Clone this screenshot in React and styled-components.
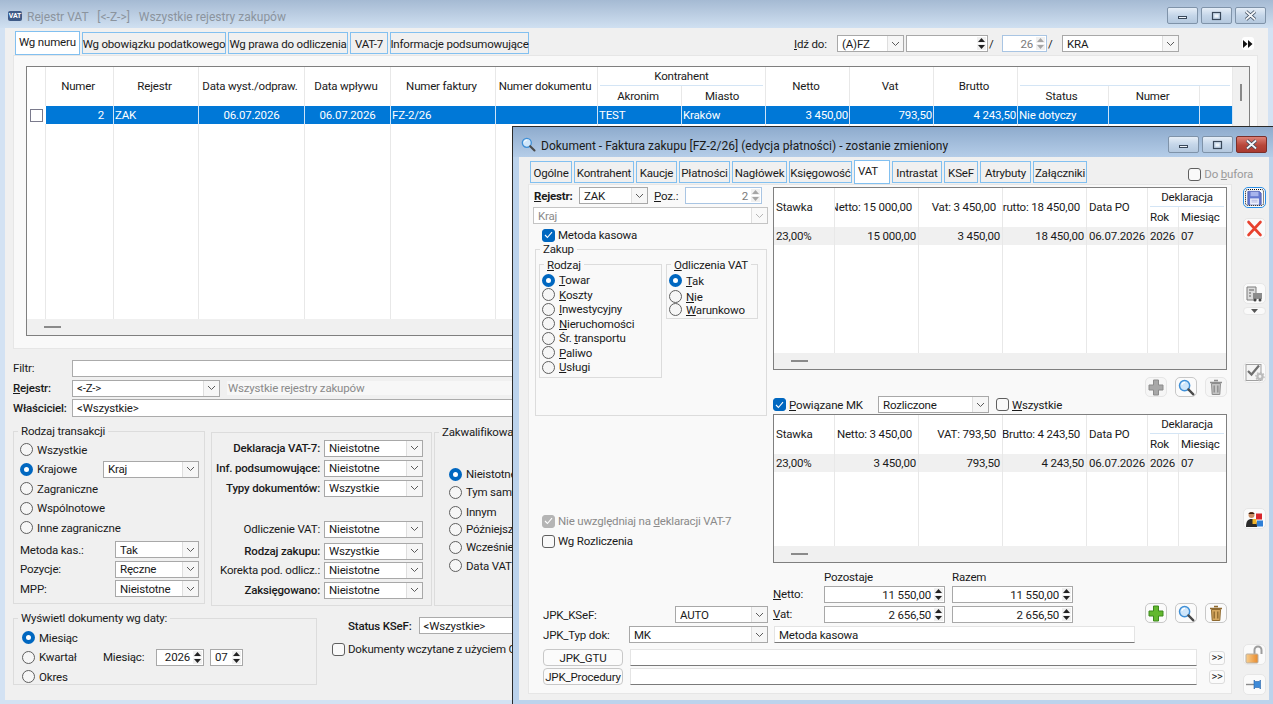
import React from 'react';
import styled, { createGlobalStyle } from 'styled-components';

const GlobalStyle = createGlobalStyle`
  html, body {
    margin: 0;
    padding: 0;
    width: 1273px;
    height: 704px;
    overflow: hidden;
    background: #c9dcf1;
  }
  body {
    font-family: Roboto, "Liberation Sans", sans-serif;
    font-size: 11.5px;
    letter-spacing: -0.18px;
    color: #1a1a1a;
  }
  fieldset { margin: 0; }
  u { text-underline-offset: 1px; }
`;

const Desktop = styled.div`
  position: relative;
  width: 1273px;
  height: 704px;
  overflow: hidden;
`;

const MainWindow = styled.div`
  display: flex;
  flex-direction: column;
  height: 704px;
  background: #d3e2f3;
`;

const TitleBar = styled.div`
  display: flex;
  align-items: center;
  flex: none;
  box-sizing: border-box;
  height: ${p => p.$h}px;
  padding: ${p => p.$active ? 5 : 3}px ${p => p.$active ? 6 : 7}px 0 8px;
  background: ${p => p.$active
    ? 'linear-gradient(#8eabcd, #b5cde8)'
    : 'linear-gradient(#a5bad3, #d0e0f1)'};
`;

const TitleText = styled.div`
  flex: 1;
  margin-left: ${p => p.$gap}px;
  padding-top: 2px;
  font-size: 12px;
  letter-spacing: 0;
  white-space: pre;
  color: ${p => p.$active ? '#1a1a1a' : '#8b949e'};
`;

const VatBadge = styled.span`
  display: flex;
  align-items: center;
  justify-content: center;
  width: 14px;
  height: 10px;
  background: #3f5a86;
  border-radius: 2px;
  color: #fff;
  font-size: 7px;
  font-weight: 700;
`;

const WinButtons = styled.div`
  display: flex;
  gap: 3px;
`;

const WinButton = styled.div`
  display: flex;
  align-items: center;
  justify-content: center;
  width: 31px;
  height: 17px;
  border: 1px solid ${p => p.$close ? '#7b2f2a' : '#7f93a9'};
  border-radius: 2px;
  box-sizing: border-box;
  background: ${p => p.$close
    ? 'linear-gradient(#dd8277, #b8473a 55%, #a93a30)'
    : 'linear-gradient(#e6eef7, #c5d6e9 50%, #b4c8de)'};
`;

const Client = styled.div`
  flex: 1;
  display: flex;
  flex-direction: column;
  min-height: 0;
  margin: 0 5px 4px;
  background: #f0f0f0;
`;

const TabBar = styled.div`
  display: flex;
  align-items: flex-end;
  flex: none;
  height: 27px;
  padding-left: ${p => p.$pad}px;
`;

const Tabs = styled.div`
  display: flex;
  align-items: flex-end;
  gap: 2px;
`;

const Tab = styled.div`
  display: flex;
  align-items: ${p => p.$active ? 'flex-start' : 'center'};
  justify-content: ${p => p.$active ? 'flex-start' : 'center'};
  box-sizing: border-box;
  width: ${p => p.$w}px;
  height: ${p => p.$active ? 24 : 22}px;
  margin-bottom: ${p => p.$lift}px;
  padding: ${p => p.$active ? 3 : 1}px 0 0 ${p => p.$active ? 3 : 0}px;
  border: 1px solid #82c0f0;
  background: ${p => p.$active ? '#fff' : '#f0f0f0'};
  white-space: nowrap;
`;

const GoTo = styled.div`
  display: flex;
  align-items: center;
  margin: 0 14px 3px auto;
`;

const GoToLabel = styled.span`
  width: 43px;
  white-space: nowrap;
`;

const Slash = styled.span`
  width: ${p => p.$w}px;
  padding-left: 1px;
  box-sizing: border-box;
`;

const NextButton = styled.div`
  display: flex;
  align-items: center;
  justify-content: center;
  width: 12px;
  height: 13px;
  margin-left: 63px;
  border-radius: 3px;
  background: #fff;
`;

const ListPanel = styled.div`
  flex: none;
  box-sizing: border-box;
  height: 294px;
  margin: 0 10px 0 8px;
  padding: 10px 0 0 12px;
  background: #f9f9f9;
  border: 1px solid #e6e6e6;
`;

const Table = styled.div`
  display: grid;
  box-sizing: border-box;
  width: ${p => p.$w}px;
  height: ${p => p.$h}px;
  grid-template-columns: ${p => p.$cols};
  grid-template-rows: 19px 20px 18px 1fr 16px;
  border: 1px solid #7f7f7f;
  background: #fff;
  overflow: hidden;
`;

const HeadCell = styled.div`
  display: flex;
  align-items: center;
  justify-content: ${p => ({ left: 'flex-start', right: 'flex-end', center: 'center' }[p.$align])};
  min-width: 0;
  padding: 0 ${p => p.$align === 'center' ? 3 : 6}px 1px ${p => p.$align === 'center' ? 0 : 2}px;
  border-right: 1px solid #e8e8e8;
  overflow: hidden;
  white-space: nowrap;
`;

const GroupHead = styled.div`
  display: flex;
  min-width: 0;
  border-right: 1px solid #e8e8e8;
`;

const GroupTitle = styled.div`
  flex: 1;
  display: flex;
  align-items: center;
  justify-content: center;
  margin: 0 2px;
  border-bottom: 1px solid #d4e5f5;
  white-space: nowrap;
`;

const RowCell = styled.div`
  display: flex;
  align-items: center;
  justify-content: ${p => ({ left: 'flex-start', right: 'flex-end', center: 'center' }[p.$align])};
  min-width: 0;
  padding: 0 ${p => p.$padEnd || p.$pad}px 0 ${p => p.$pad}px;
  background: ${p => p.$selected ? '#0078d7' : '#f0f0f0'};
  color: ${p => p.$selected ? '#fff' : '#1a1a1a'};
  border-right: 1px solid ${p => p.$selected ? '#cfe3f6' : '#e8e8e8'};
  overflow: hidden;
  white-space: nowrap;
`;

const MarkerCell = styled.div`
  display: flex;
  align-items: center;
  justify-content: center;
  background: #fff;
`;

const RowMarker = styled.span`
  box-sizing: border-box;
  width: 13px;
  height: 13px;
  border: 1px solid #7a7a8c;
  background: #fff;
`;

const FillCell = styled.div`
  border-right: 1px solid #e8e8e8;
`;

const HScroll = styled.div`
  display: flex;
  align-items: center;
  grid-column: 1 / -1;
  padding-left: 17px;
  background: #f0f0f0;
`;

const HThumb = styled.span`
  width: 17px;
  height: 2px;
  background: #8a8a8a;
`;

const VScroll = styled.div`
  grid-row: 1 / 5;
  padding: 17px 0 0 7px;
  background: #f0f0f0;
`;

const VThumb = styled.div`
  width: 2px;
  height: 17px;
  background: #8a8a8a;
`;

const FilterForm = styled.div`
  display: grid;
  flex: none;
  grid-template-columns: 59px 1fr;
  grid-auto-rows: 18px;
  row-gap: 2px;
  align-items: center;
  margin: 10px 10px 0 8px;
`;

const Label = styled.span`
  width: ${p => (p.$w ? `${p.$w}px` : 'auto')};
  flex: none;
  box-sizing: border-box;
  padding-left: ${p => p.$pl || 0}px;
  font-weight: ${p => (p.$bold ? 700 : p.$strong ? 500 : 400)};
  text-align: ${p => p.$right ? 'right' : 'left'};
  color: ${p => p.$muted ? '#8a8a8a' : 'inherit'};
  white-space: nowrap;
`;

const FieldRow = styled.div`
  display: flex;
  gap: 6px;
  align-items: center;
`;

const TextField = styled.div`
  display: flex;
  align-items: center;
  box-sizing: border-box;
  flex: ${p => (p.$w ? 'none' : '1')};
  width: ${p => (p.$w ? `${p.$w}px` : 'auto')};
  height: ${p => p.$h || 17}px;
  padding-left: ${p => p.$readonly ? 1 : 4}px;
  background: ${p => p.$readonly ? '#f7f7f7' : '#fff'};
  color: ${p => p.$readonly ? '#8a8a8a' : 'inherit'};
  border: 1px solid ${p => p.$readonly ? '#f0f0f0' : p.$flat ? '#e4e4e4' : '#ababab'};
  border-bottom-color: ${p => p.$readonly ? '#f0f0f0' : p.$flat ? '#7a7a7a' : '#ababab'};
  white-space: nowrap;
`;

const ComboBox = styled.div`
  display: flex;
  align-items: center;
  flex: none;
  box-sizing: border-box;
  width: ${p => p.$w}px;
  height: 17px;
  margin-left: ${p => (p.$push ? 'auto' : '0')};
  padding-left: 4px;
  background: #fff;
  border: 1px solid ${p => p.$disabled ? '#c4c4c4' : '#a8a8a8'};
  color: ${p => p.$disabled ? '#8a8a8a' : 'inherit'};
`;

const ComboText = styled.span`
  flex: 1;
  min-width: 0;
  white-space: nowrap;
  overflow: hidden;
`;

const ComboArrow = styled.span`
  display: flex;
  align-items: center;
  justify-content: center;
  align-self: stretch;
  width: 15px;
  background: ${p => p.$disabled ? '#f9f9f9' : '#f6f6f6'};
  border-left: 1px solid #dedede;
`;

const SpinBox = styled.div`
  display: flex;
  align-items: center;
  flex: none;
  box-sizing: border-box;
  width: ${p => p.$w}px;
  height: ${p => p.$h || 17}px;
  padding-left: 4px;
  background: #fff;
  border: 1px solid ${p => p.$disabled ? '#a9c5e3' : '#a8a8a8'};
  color: ${p => p.$disabled ? '#7a7a7a' : 'inherit'};
`;

const SpinText = styled.span`
  flex: 1;
  padding-right: ${p => p.$left ? 0 : 2}px;
  text-align: ${p => p.$left ? 'left' : 'right'};
  white-space: nowrap;
`;

const SpinArrows = styled.span`
  display: flex;
  flex-direction: column;
  align-self: stretch;
  gap: 1px;
  width: 11px;
  padding: 1px;
  box-sizing: border-box;
`;

const SpinStep = styled.span`
  flex: 1;
  display: flex;
  align-items: center;
  justify-content: center;
  background: #f0f0f0;
`;

const TransactionRow = styled.div`
  display: flex;
  flex: none;
  gap: ${p => p.$gap || 0}px;
  align-items: flex-start;
  margin: ${p => p.$mt}px 0 0 8px;
`;

const Group = styled.fieldset`
  box-sizing: border-box;
  flex: none;
  width: ${p => p.$w}px;
  height: ${p => p.$h}px;
  margin: ${p => p.$mt || 0}px 0 0 ${p => p.$ml || 0}px;
  padding: 0;
  border: 1px solid #dcdcdc;
  min-width: 0;
`;

const GroupBody = styled.div`
  padding: ${p => p.$pad};
`;

const GroupLegend = styled.legend`
  margin-left: 4px;
  padding: 0 3px;
  height: ${p => p.$h || 16}px;
  line-height: ${p => (p.$h ? p.$h + 3 : 16)}px;
  white-space: nowrap;
`;

const PlainGroup = styled.div`
  box-sizing: border-box;
  flex: none;
  width: ${p => p.$w}px;
  height: ${p => p.$h}px;
  margin-top: ${p => p.$mt}px;
  padding: 5px 8px 0 0;
  border: 1px solid #dcdcdc;
`;

const OptionRow = styled.div`
  display: flex;
  align-items: center;
  height: ${p => p.$h}px;
  margin-top: ${p => p.$mt || 0}px;
`;

const RadioDot = styled.span`
  flex: none;
  box-sizing: border-box;
  width: 13px;
  height: 13px;
  margin-right: 4px;
  border-radius: 50%;
  border: ${p => p.$on ? '4px solid #0067c0' : '1px solid #5f5f5f'};
  background: ${p => p.$on ? '#fff' : '#f6f6f6'};
`;

const CheckBox = styled.span`
  display: flex;
  align-items: center;
  justify-content: center;
  flex: none;
  box-sizing: border-box;
  width: 13px;
  height: 13px;
  margin-right: 3px;
  border-radius: 3px;
  border: 1px solid ${p => p.$on ? (p.$muted ? '#b5b5b5' : '#0067c0') : '#5f5f5f'};
  background: ${p => p.$on ? (p.$muted ? '#b5b5b5' : '#0067c0') : '#f9f9f9'};
`;

const MiddleRow = styled.div`
  display: grid;
  grid-template-columns: minmax(0, 1fr) 99px;
  column-gap: 4px;
  align-items: center;
  height: ${p => p.$h}px;
  margin-top: ${p => p.$mt || 0}px;
`;

const StatusColumn = styled.div`
  display: flex;
  flex-direction: column;
  margin: 7px 0 0 15px;
  white-space: nowrap;
`;

const StatusRow = styled.div`
  display: flex;
  align-items: center;
  gap: 7px;
  padding-left: 16px;
`;

const DateFilter = styled.div`
  padding: 2px 0 0 8px;
`;

const DocumentWindow = styled.div`
  position: absolute;
  left: 512px;
  top: 126px;
  width: 761px;
  height: 578px;
  display: flex;
  flex-direction: column;
  box-sizing: border-box;
  border-top: 1px solid #2a2a2a;
  border-left: 1px solid #2a2a2a;
  background: #bcd3ec;
`;

const DocClient = styled.div`
  flex: 1;
  display: flex;
  flex-direction: column;
  min-height: 0;
  margin: 0 4px 4px 6px;
  background: #f0f0f0;
`;

const DoBufora = styled.div`
  display: flex;
  align-items: center;
  margin: 0 16px 3px auto;
  color: #9a9a9a;
`;

const DocBody = styled.div`
  flex: 1;
  display: flex;
  min-height: 0;
`;

const DocPanel = styled.div`
  display: flex;
  flex-direction: column;
  box-sizing: border-box;
  flex: none;
  width: 704px;
  height: 510px;
  margin-left: 9px;
  background: #f9f9f9;
  border: 1px solid #e6e6e6;
`;

const UpperArea = styled.div`
  display: flex;
  flex: none;
  gap: 5px;
  height: 378px;
  padding: 2px 0 0 4px;
`;

const FormColumn = styled.div`
  flex: none;
  width: 235px;
`;

const RegisterRow = styled.div`
  display: flex;
  align-items: center;
  height: 17px;
`;

const KrajRow = styled.div`
  margin-top: 3px;
`;

const CheckRow = styled.div`
  display: flex;
  align-items: center;
  height: ${p => p.$h || 18}px;
  margin-top: ${p => p.$mt || 0}px;
  padding-left: ${p => p.$pad || 0}px;
`;

const InnerGroups = styled.div`
  display: flex;
  gap: 4px;
  padding-left: 3px;
  align-items: flex-start;
`;

const TablesColumn = styled.div`
  flex: none;
  width: 454px;
`;

const Toolbar = styled.div`
  display: flex;
  justify-content: flex-end;
  gap: 8px;
  height: 19px;
  margin-top: ${p => p.$mt || 0}px;
`;

const ToolButton = styled.div`
  display: flex;
  align-items: center;
  justify-content: center;
  flex: none;
  box-sizing: border-box;
  width: 22px;
  height: ${p => p.$h || 20}px;
  border: 1px solid ${p => p.$on ? '#c8c8c8' : '#e6e6e6'};
  border-radius: 5px;
  background: ${p => p.$on ? '#fbfbfb' : '#f6f6f6'};
`;

const LinkedRow = styled.div`
  display: flex;
  align-items: center;
  height: 17px;
  margin-bottom: 1px;
`;

const LinkedLabel = styled.div`
  display: flex;
  align-items: center;
  width: 105px;
`;

const LinkedAll = styled.div`
  display: flex;
  align-items: center;
  margin-left: 7px;
`;

const LowerArea = styled.div`
  display: flex;
  flex-direction: column;
  padding-left: 14px;
  margin-top: 5px;
`;

const SummaryRow = styled.div`
  display: flex;
  align-items: flex-end;
`;

const KsefBlock = styled.div`
  display: flex;
  align-items: center;
  justify-content: space-between;
  width: 225px;
  height: 17px;
  flex: none;
`;

const Amounts = styled.div`
  display: grid;
  flex: none;
  grid-template-columns: 51px 121px 128px;
  grid-template-rows: 16px 20px 17px;
  align-items: start;
  margin-left: 5px;
  width: 300px;
`;

const AmountLabel = styled.span`
  line-height: 17px;
`;

const AmountCell = styled.div`
  display: flex;
  padding-left: ${p => p.$shift || 0}px;
  white-space: nowrap;
`;

const SummaryTools = styled(Toolbar)`
  height: 20px;
  margin-left: auto;
  margin-right: 4px;
`;

const FormRow = styled.div`
  display: flex;
  align-items: center;
  gap: ${p => p.$gap || 0}px;
  height: 17px;
  margin-top: ${p => p.$mt || 0}px;
`;

const PushButton = styled.div`
  display: flex;
  align-items: center;
  justify-content: center;
  flex: none;
  box-sizing: border-box;
  width: 80px;
  height: 17px;
  border: 1px solid #c8c8c8;
  border-radius: 4px;
  background: #fbfbfb;
  white-space: nowrap;
`;

const MoreButton = styled.div`
  display: flex;
  align-items: center;
  justify-content: center;
  flex: none;
  box-sizing: border-box;
  width: 16px;
  height: 14px;
  margin-left: 5px;
  border: 1px solid #dcdcdc;
  border-radius: 3px;
  background: #fbfbfb;
  font-size: 11px;
`;

const Sidebar = styled.div`
  display: flex;
  flex-direction: column;
  flex: none;
  width: 36px;
  padding-left: 11px;
  box-sizing: border-box;
`;

const SideButton = styled.div`
  display: flex;
  align-items: center;
  justify-content: center;
  box-sizing: border-box;
  width: 23px;
  height: ${p => p.$h || 21}px;
  margin-top: ${p => p.$mt}px;
  border-radius: 5px;
  background: #fafafa;
  border: 1px solid ${p => p.$focus ? '#2b8fe6' : '#e6e6e6'};
  outline: ${p => p.$focus ? '1px dotted #111' : 'none'};
  outline-offset: -3px;
`;

const Chevron = ({ color = '#5a5a5a' }) => (
  <svg width="9" height="6" viewBox="0 0 9 6">
    <path d="M1 1l3.5 3.5L8 1" fill="none" stroke={color} strokeWidth="1" />
  </svg>
);

const Combo = ({ w, push, disabled, children }) => (
  <ComboBox $w={w} $push={push} $disabled={disabled}>
    <ComboText>{children}</ComboText>
    <ComboArrow $disabled={disabled}>
      <Chevron color={disabled ? '#b5b5b5' : '#5a5a5a'} />
    </ComboArrow>
  </ComboBox>
);

const Triangle = ({ up, color }) => (
  <svg width="7" height="4" viewBox="0 0 7 4">
    <path d={up ? 'M3.5 0L7 4H0z' : 'M0 0h7L3.5 4z'} fill={color} />
  </svg>
);

const Spin = ({ w, left, disabled, children }) => {
  const color = disabled ? '#a5a5a5' : '#222';
  return (
    <SpinBox $w={w} $disabled={disabled}>
      <SpinText $left={left}>{children}</SpinText>
      <SpinArrows>
        <SpinStep><Triangle up color={color} /></SpinStep>
        <SpinStep><Triangle color={color} /></SpinStep>
      </SpinArrows>
    </SpinBox>
  );
};

const Radio = ({ on, h, mt, children }) => (
  <OptionRow $h={h} $mt={mt}>
    <RadioDot $on={on} />
    <span>{children}</span>
  </OptionRow>
);

const Check = ({ on, muted }) => (
  <CheckBox $on={on} $muted={muted}>
    {on && (
      <svg width="9" height="8" viewBox="0 0 9 8">
        <path d="M1 4l2.4 2.5L8 1.2" fill="none" stroke="#fff" strokeWidth="1.1" />
      </svg>
    )}
  </CheckBox>
);

const DataTable = ({ w, h, columns, selected, vscroll, cellPad }) => {
  const template = columns.map(c => `${c.w}px`).join(' ') + (vscroll ? ' 16px' : '');
  const head = [];
  columns.forEach((c, i) => {
    if (c.marker) {
      head.push(<FillCell key={`h${i}`} style={{ gridColumn: i + 1, gridRow: '1 / span 2' }} />);
    } else if (c.span !== undefined) {
      head.push(
        <GroupHead key={`g${i}`} style={{ gridColumn: `${i + 1} / span ${c.span}`, gridRow: 1 }}>
          <GroupTitle>{c.group}</GroupTitle>
        </GroupHead>
      );
    }
    if (c.sub !== undefined) {
      head.push(
        <HeadCell key={`s${i}`} $align={c.subAlign || 'center'} style={{ gridColumn: i + 1, gridRow: 2 }}>
          {c.sub}
        </HeadCell>
      );
    } else if (!c.marker) {
      head.push(
        <HeadCell key={`h${i}`} $align={c.headAlign || 'center'} style={{ gridColumn: i + 1, gridRow: '1 / span 2' }}>
          {c.head}
        </HeadCell>
      );
    }
  });
  return (
    <Table $w={w} $h={h} $cols={template}>
      {head}
      {columns.map((c, i) => c.marker
        ? <MarkerCell key={`r${i}`} style={{ gridColumn: i + 1, gridRow: 3 }}><RowMarker /></MarkerCell>
        : <RowCell key={`r${i}`} $align={c.align || 'left'} $pad={cellPad} $padEnd={c.padEnd} $selected={selected} style={{ gridColumn: i + 1, gridRow: 3 }}>{c.val}</RowCell>
      )}
      {columns.map((c, i) => <FillCell key={`f${i}`} style={{ gridColumn: i + 1, gridRow: 4 }} />)}
      {vscroll && <VScroll style={{ gridColumn: columns.length + 1 }}><VThumb /></VScroll>}
      <HScroll><HThumb /></HScroll>
    </Table>
  );
};

const registerColumns = [
  { w: 19, marker: true },
  { w: 68, head: 'Numer', val: '2', align: 'right', padEnd: 9 },
  { w: 85, head: 'Rejestr', val: 'ZAK' },
  { w: 106, head: 'Data wyst./odpraw.', val: '06.07.2026', align: 'center' },
  { w: 86, head: 'Data wpływu', val: '06.07.2026', align: 'center' },
  { w: 105, head: 'Numer faktury', val: 'FZ-2/26' },
  { w: 102, head: 'Numer dokumentu', val: '' },
  { w: 84, span: 2, group: 'Kontrahent', sub: 'Akronim', val: 'TEST' },
  { w: 84, sub: 'Miasto', val: 'Kraków' },
  { w: 84, head: 'Netto', val: '3 450,00', align: 'right' },
  { w: 84, head: 'Vat', val: '793,50', align: 'right' },
  { w: 84, head: 'Brutto', val: '4 243,50', align: 'right' },
  { w: 91, span: 3, group: '', sub: 'Status', val: 'Nie dotyczy' },
  { w: 91, sub: 'Numer', val: '' },
  { w: 33, sub: '', val: '' },
];

const vatColumns = (netto, vat, brutto, vals) => [
  { w: 61, head: 'Stawka', headAlign: 'left', val: '23,00%' },
  { w: 84, head: netto, headAlign: 'right', val: vals[0], align: 'right' },
  { w: 84, head: vat, headAlign: 'right', val: vals[1], align: 'right' },
  { w: 84, head: brutto, headAlign: 'right', val: vals[2], align: 'right' },
  { w: 61, head: 'Data PO', headAlign: 'left', val: '06.07.2026' },
  { w: 31, span: 2, group: 'Deklaracja', sub: 'Rok', subAlign: 'left', val: '2026' },
  { w: 48, sub: 'Miesiąc', subAlign: 'left', val: '07' },
];

const MinimizeIcon = () => (
  <svg width="11" height="9" viewBox="0 0 11 9">
    <rect x="1.500" y="5.500" width="8" height="2" fill="#eef3f9" stroke="#39485a" />
  </svg>
);

const RestoreIcon = () => (
  <svg width="11" height="10" viewBox="0 0 11 10">
    <rect x="1.500" y="1.500" width="8" height="7" fill="none" stroke="#39485a" strokeWidth="1.200" />
    <rect x="3.500" y="3.500" width="4" height="3" fill="#eef3f9" />
  </svg>
);

const CloseIcon = () => (
  <svg width="13" height="11" viewBox="0 0 13 11">
    <path d="M2 1.500l9 8M11 1.500l-9 8" stroke="#39485a" strokeWidth="3.400" />
    <path d="M2 1.500l9 8M11 1.500l-9 8" stroke="#f4f6f9" strokeWidth="1.800" />
  </svg>
);

const SearchIcon = ({ size = 16 }) => (
  <svg width={size} height={size} viewBox="0 0 16 16">
    <circle cx="6.200" cy="6.200" r="4.800" fill="#cfe6fa" stroke="#3f8fd6" strokeWidth="1.400" />
    <path d="M3.600 5.600a3 3 0 0 1 3-2.400" fill="none" stroke="#fff" strokeWidth="1" />
    <path d="M9.800 9.800l4.600 4.600" stroke="#4a4a4a" strokeWidth="2.200" strokeLinecap="round" />
  </svg>
);

const PlusIcon = ({ fill, stroke }) => (
  <svg width="16" height="17" viewBox="0 0 16 17">
    <path d="M5.500 1h5v5h4.500v5h-4.500v5h-5v-5H1V6h4.500z" fill={fill} stroke={stroke} />
  </svg>
);

const TrashIcon = ({ fill, stroke }) => (
  <svg width="14" height="17" viewBox="0 0 14 17">
    <path d="M5 1.500h4M1 3.500h12" stroke={stroke} strokeWidth="1.600" />
    <path d="M2.500 4.500h9l-.7 11H3.200z" fill={fill} stroke={stroke} />
    <path d="M5.200 6.500v7M8.800 6.500v7" stroke={stroke} strokeWidth="1.400" />
  </svg>
);

const SaveIcon = () => (
  <svg width="15" height="16" viewBox="0 0 17 17">
    <path d="M1 1h13l2 2v13H1z" fill="#6478cf" stroke="#4a5bb0" />
    <rect x="4" y="1.500" width="9" height="5" fill="#a7b4ec" />
    <rect x="3.500" y="9" width="10" height="7" fill="#eef0fb" />
    <path d="M5 11h7M5 13h7" stroke="#a5aede" />
  </svg>
);

const CancelIcon = () => (
  <svg width="17" height="17" viewBox="0 0 17 17">
    <path d="M2.500 2l12 13M14.500 2l-12 13" stroke="#e8412e" strokeWidth="2.600" strokeLinecap="round" />
  </svg>
);

const DepotIcon = () => (
  <svg width="17" height="17" viewBox="0 0 17 17">
    <path d="M1 2h9v13H1z" fill="#dcdcdc" stroke="#7c7c7c" />
    <path d="M3 5h5M3 8h2M3 11h2" stroke="#8a8a8a" strokeWidth="1.400" />
    <rect x="7" y="8" width="9" height="6" fill="#8c8c8c" />
    <circle cx="9" cy="15" r="1.500" fill="#444" />
    <circle cx="14" cy="15" r="1.500" fill="#444" />
  </svg>
);

const DropIcon = () => (
  <svg width="7" height="4" viewBox="0 0 7 4">
    <path d="M0 0h7L3.500 4z" fill="#555" />
  </svg>
);

const VerifyIcon = () => (
  <svg width="20" height="19" viewBox="0 0 20 19">
    <rect x="1" y="1.500" width="15" height="16" fill="#f4f4f4" stroke="#a0a0a0" />
    <path d="M3 8l3.500 3.500L14 2.500" fill="none" stroke="#6f6f6f" strokeWidth="2.200" />
    <circle cx="15" cy="13.500" r="2.600" fill="#f4f4f4" stroke="#bcbcbc" strokeWidth="2.400" />
    <circle cx="15" cy="13.500" r="4.200" fill="none" stroke="#bcbcbc" strokeWidth="1.200" strokeDasharray="1.600 1.600" />
  </svg>
);

const PersonIcon = () => (
  <svg width="18" height="18" viewBox="0 0 18 18">
    <path d="M0 17c0-6 2-8 5.500-8S11 11 11 17z" fill="#2b2b2b" />
    <circle cx="5.500" cy="5" r="3" fill="#c98d63" />
    <path d="M2.500 4c0-2.500 6-2.500 6 0z" fill="#3a1d0f" />
    <rect x="10" y="3.500" width="6" height="6" fill="#d8262c" />
    <rect x="6.500" y="9" width="4" height="5" fill="#f0b428" />
    <rect x="11" y="10.500" width="6" height="6" fill="#2f7fd6" />
  </svg>
);

const LockIcon = () => (
  <svg width="19" height="19" viewBox="0 0 19 19">
    <path d="M9.500 9V5a3.500 3.500 0 0 1 7 0v4" fill="none" stroke="#9d9d9d" strokeWidth="2" />
    <defs>
      <linearGradient id="lockBody" x1="0" x2="1" y1="0" y2="0">
        <stop offset="0" stopColor="#f8cf8f" />
        <stop offset="1" stopColor="#e88a2c" />
      </linearGradient>
    </defs>
    <rect x="1" y="9" width="12" height="9" rx="1" fill="url(#lockBody)" stroke="#b9b0a4" />
  </svg>
);

const PinIcon = () => (
  <svg width="17" height="13" viewBox="0 0 17 13">
    <path d="M0 6.500h8" stroke="#8a8a8a" strokeWidth="1.400" />
    <path d="M8 2l1.500 1.500H13L14.500 2v9L13 9.500H9.500L8 11z" fill="#3d8ad8" stroke="#2a63a8" strokeWidth=".6" />
  </svg>
);

const mainTabs = [
  ['Wg numeru', 65, true],
  ['Wg obowiązku podatkowego', 144],
  ['Wg prawa do odliczenia', 120],
  ['VAT-7', 38],
  ['Informacje podsumowujące', 139],
];

const docTabs = [
  ['Ogólne', 42],
  ['Kontrahent', 60],
  ['Kaucje', 41],
  ['Płatności', 51],
  ['Nagłówek', 55],
  ['Księgowość', 63],
  ['VAT', 36, true],
  ['Intrastat', 50],
  ['KSeF', 34],
  ['Atrybuty', 51],
  ['Załączniki', 54],
];

const middleFilters = [
  { label: 'Deklaracja VAT-7:', value: 'Nieistotne', h: 20, strong: true },
  { label: 'Inf. podsumowujące:', value: 'Nieistotne', h: 20, strong: true },
  { label: 'Typy dokumentów:', value: 'Wszystkie', h: 20, strong: true },
  { label: 'Odliczenie VAT:', value: 'Nieistotne', h: 20, mt: 21 },
  { label: 'Rodzaj zakupu:', value: 'Wszystkie', h: 20, mt: 2, strong: true },
  { label: 'Korekta pod. odlicz.:', value: 'Nieistotne', h: 18 },
  { label: 'Zaksięgowano:', value: 'Nieistotne', h: 22, strong: true },
];

const qualifiedOptions = [
  ['Nieistotne', 18, true],
  ['Tym samym', 18],
  ['Innym', 18, false, 2],
  ['Późniejszym', 16],
  ['Wcześniejszym', 20],
  ['Data VAT', 17],
];

const kindOptions = [
  [<><u>T</u>owar</>, true],
  [<><u>K</u>oszty</>],
  [<><u>I</u>nwestycyjny</>],
  [<><u>N</u>ieruchomości</>],
  [<>Śr. <u>t</u>ransportu</>],
  [<><u>P</u>aliwo</>],
  [<><u>U</u>sługi</>],
];

export default function App() {
  return (
    <Desktop>
      <GlobalStyle />
      <MainWindow>
        <TitleBar $h={28}>
          <VatBadge>VAT</VatBadge>
          <TitleText $gap={5}>{'Rejestr VAT   [<-Z->]   Wszystkie rejestry zakupów'}</TitleText>
          <WinButtons>
            <WinButton><MinimizeIcon /></WinButton>
            <WinButton><RestoreIcon /></WinButton>
            <WinButton><CloseIcon /></WinButton>
          </WinButtons>
        </TitleBar>
        <Client>
          <TabBar $pad={10}>
            <Tabs>
              {mainTabs.map(([text, w, active]) => (
                <Tab key={text} $w={w} $active={active} $lift={active ? 0 : 1}>{text}</Tab>
              ))}
            </Tabs>
            <GoTo>
              <GoToLabel><u>I</u>dź do:</GoToLabel>
              <Combo w={67}>(A)FZ</Combo>
              <Slash $w={2} />
              <Spin w={82} />
              <Slash $w={14}>/</Slash>
              <Spin w={45} disabled>26</Spin>
              <Slash $w={15}>/</Slash>
              <Combo w={117}>KRA</Combo>
              <NextButton>
                <svg width="10" height="8" viewBox="0 0 10 8">
                  <path d="M0 0l4.500 4L0 8zM5 0l4.500 4L5 8z" fill="#111" />
                </svg>
              </NextButton>
            </GoTo>
          </TabBar>
          <ListPanel>
            <DataTable w={1224} h={270} columns={registerColumns} selected vscroll cellPad={1} />
          </ListPanel>
          <FilterForm>
            <Label>Filtr:</Label>
            <TextField />
            <Label $strong><u>R</u>ejestr:</Label>
            <FieldRow>
              <Combo w={148}>{'<-Z->'}</Combo>
              <TextField $readonly $h={16}>Wszystkie rejestry zakupów</TextField>
            </FieldRow>
            <Label $strong>Właściciel:</Label>
            <TextField $h={18}>{'<Wszystkie>'}</TextField>
          </FilterForm>
          <TransactionRow $gap={6} $mt={6}>
            <Group $w={192} $h={181}>
              <GroupLegend>Rodzaj transakcji</GroupLegend>
              <GroupBody $pad="1px 5px 0 6px">
                <Radio h={19.5}>Wszystkie</Radio>
                <OptionRow $h={19.5}>
                  <RadioDot $on />
                  <span>Krajowe</span>
                  <Combo w={96} push>Kraj</Combo>
                </OptionRow>
                <Radio h={19.5}>Zagraniczne</Radio>
                <Radio h={19.5}>Wspólnotowe</Radio>
                <Radio h={19.5}>Inne zagraniczne</Radio>
                <OptionRow $h={19.5} $mt={2.5}>
                  <span>Metoda kas.:</span>
                  <Combo w={84} push>Tak</Combo>
                </OptionRow>
                <OptionRow $h={19.5}>
                  <span>Pozycje:</span>
                  <Combo w={84} push>Ręczne</Combo>
                </OptionRow>
                <OptionRow $h={19.5}>
                  <span>MPP:</span>
                  <Combo w={84} push>Nieistotne</Combo>
                </OptionRow>
              </GroupBody>
            </Group>
            <PlainGroup $w={221} $h={174} $mt={9}>
              {middleFilters.map(f => (
                <MiddleRow key={f.label} $h={f.h} $mt={f.mt}>
                  <Label $right $strong={f.strong}>{f.label}</Label>
                  <Combo w={99}>{f.value}</Combo>
                </MiddleRow>
              ))}
            </PlainGroup>
            <Group $w={400} $h={182} $mt={1} $ml={-4}>
              <GroupLegend>Zakwalifikowane do deklaracji</GroupLegend>
              <GroupBody $pad="25px 0 0 14px">
                {qualifiedOptions.map(([text, h, on, mt]) => (
                  <Radio key={text} h={h} on={on} mt={mt}>{text}</Radio>
                ))}
              </GroupBody>
            </Group>
          </TransactionRow>
          <TransactionRow $mt={4}>
            <Group $w={304} $h={75}>
              <GroupLegend>Wyświetl dokumenty wg daty:</GroupLegend>
              <DateFilter>
                <Radio on h={19.5}>Miesiąc</Radio>
                <OptionRow $h={19.5}>
                  <RadioDot />
                  <Label $w={64}>Kwartał</Label>
                  <Label $w={53}>Miesiąc:</Label>
                  <Spin w={48}>2026</Spin>
                  <Slash $w={6} />
                  <Spin w={33} left>07</Spin>
                </OptionRow>
                <Radio h={19.5}>Okres</Radio>
              </DateFilter>
            </Group>
            <StatusColumn>
              <StatusRow>
                <Label $strong>Status KSeF:</Label>
                <TextField $w={300} $h={17}>{'<Wszystkie>'}</TextField>
              </StatusRow>
              <CheckRow $mt={6}>
                <Check />
                <span>Dokumenty wczytane z użyciem OCR</span>
              </CheckRow>
            </StatusColumn>
          </TransactionRow>
        </Client>
      </MainWindow>

      <DocumentWindow>
        <TitleBar $h={30} $active>
          <SearchIcon size={15} />
          <TitleText $gap={5} $active>Dokument - Faktura zakupu [FZ-2/26] (edycja płatności) - zostanie zmieniony</TitleText>
          <WinButtons>
            <WinButton><MinimizeIcon /></WinButton>
            <WinButton><RestoreIcon /></WinButton>
            <WinButton $close><CloseIcon /></WinButton>
          </WinButtons>
        </TitleBar>
        <DocClient>
          <TabBar $pad={11}>
            <Tabs>
              {docTabs.map(([text, w, active]) => (
                <Tab key={text} $w={w} $active={active} $lift={active ? 0 : 1}>{text}</Tab>
              ))}
            </Tabs>
            <DoBufora>
              <Check />
              <span>Do <u>b</u>ufora</span>
            </DoBufora>
          </TabBar>
          <DocBody>
            <DocPanel>
              <UpperArea>
                <FormColumn>
                  <RegisterRow>
                    <Label $w={46} $pl={1} $bold><u>R</u>ejestr:</Label>
                    <Combo w={69}>ZAK</Combo>
                    <Label $w={37} $pl={6}><u>P</u>oz.:</Label>
                    <Spin w={77} disabled>2</Spin>
                  </RegisterRow>
                  <KrajRow>
                    <Combo w={235} disabled>Kraj</Combo>
                  </KrajRow>
                  <CheckRow $pad={9} $mt={2}>
                    <Check on />
                    <span>Metoda kasowa</span>
                  </CheckRow>
                  <Group $w={232} $h={175} $ml={2} $mt={-3}>
                    <GroupLegend>Zakup</GroupLegend>
                    <InnerGroups>
                      <Group $w={123} $h={121}>
                        <GroupLegend $h={14}><u>R</u>odzaj</GroupLegend>
                        <GroupBody $pad="2px 0 0 2px">
                          {kindOptions.map(([text, on], i) => (
                            <Radio key={i} on={on} h={14.5}>{text}</Radio>
                          ))}
                        </GroupBody>
                      </Group>
                      <Group $w={92} $h={62}>
                        <GroupLegend $h={14}><u>O</u>dliczenia VAT</GroupLegend>
                        <GroupBody $pad="2px 0 0 2px">
                          <Radio on h={15}><u>T</u>ak</Radio>
                          <Radio h={13} mt={2}><u>N</u>ie</Radio>
                          <Radio h={13}><u>W</u>arunkowo</Radio>
                        </GroupBody>
                      </Group>
                    </InnerGroups>
                  </Group>
                  <CheckRow $pad={9} $mt={96}>
                    <Check on muted />
                    <Label $muted>Nie uwzględniaj na <u>d</u>eklaracji VAT-7</Label>
                  </CheckRow>
                  <CheckRow $pad={9} $mt={2}>
                    <Check />
                    <span>Wg Rozliczenia</span>
                  </CheckRow>
                </FormColumn>
                <TablesColumn>
                  <DataTable
                    w={454}
                    h={183}
                    cellPad={2}
                    columns={vatColumns('Netto: 15 000,00', 'Vat: 3 450,00', 'Brutto: 18 450,00', ['15 000,00', '3 450,00', '18 450,00'])}
                  />
                  <Toolbar $mt={7}>
                    <ToolButton><PlusIcon fill="#a8a8a8" stroke="#8c8c8c" /></ToolButton>
                    <ToolButton $on><SearchIcon size={17} /></ToolButton>
                    <ToolButton><TrashIcon fill="#c4c4c4" stroke="#8e8e8e" /></ToolButton>
                  </Toolbar>
                  <LinkedRow>
                    <LinkedLabel>
                      <Check on />
                      <span><u>P</u>owiązane MK</span>
                    </LinkedLabel>
                    <Combo w={111}>Rozliczone</Combo>
                    <LinkedAll>
                      <Check />
                      <span><u>W</u>szystkie</span>
                    </LinkedAll>
                  </LinkedRow>
                  <DataTable
                    w={454}
                    h={149}
                    cellPad={2}
                    columns={vatColumns('Netto: 3 450,00', 'VAT: 793,50', 'Brutto: 4 243,50', ['3 450,00', '793,50', '4 243,50'])}
                  />
                </TablesColumn>
              </UpperArea>
              <LowerArea>
                <SummaryRow>
                  <KsefBlock>
                    <span>JPK_KSeF:</span>
                    <Combo w={93}>AUTO</Combo>
                  </KsefBlock>
                  <Amounts>
                    <span />
                    <AmountCell>Pozostaje</AmountCell>
                    <AmountCell $shift={7}>Razem</AmountCell>
                    <AmountLabel><u>N</u>etto:</AmountLabel>
                    <AmountCell><Spin w={121}>11 550,00</Spin></AmountCell>
                    <AmountCell $shift={7}><Spin w={121}>11 550,00</Spin></AmountCell>
                    <AmountLabel><u>V</u>at:</AmountLabel>
                    <AmountCell><Spin w={121}>2 656,50</Spin></AmountCell>
                    <AmountCell $shift={7}><Spin w={121}>2 656,50</Spin></AmountCell>
                  </Amounts>
                  <SummaryTools>
                    <ToolButton $on><PlusIcon fill="#62b82e" stroke="#3d8a1c" /></ToolButton>
                    <ToolButton $on><SearchIcon size={17} /></ToolButton>
                    <ToolButton $on><TrashIcon fill="#d6a860" stroke="#8f6a30" /></ToolButton>
                  </SummaryTools>
                </SummaryRow>
                <FormRow $mt={3}>
                  <Label $w={86}>JPK_Typ dok:</Label>
                  <Combo w={139}>MK</Combo>
                  <Slash $w={6} />
                  <TextField $w={361} $flat>Metoda kasowa</TextField>
                </FormRow>
                <FormRow $mt={6} $gap={7}>
                  <PushButton>JPK_GTU</PushButton>
                  <TextField $w={567} $flat />
                  <MoreButton>{'>>'}</MoreButton>
                </FormRow>
                <FormRow $mt={2} $gap={7}>
                  <PushButton>JPK_Procedury</PushButton>
                  <TextField $w={567} $flat />
                  <MoreButton>{'>>'}</MoreButton>
                </FormRow>
              </LowerArea>
            </DocPanel>
            <Sidebar>
              <SideButton $mt={3} $focus><SaveIcon /></SideButton>
              <SideButton $mt={10}><CancelIcon /></SideButton>
              <SideButton $mt={44}><DepotIcon /></SideButton>
              <SideButton $mt={3} $h={8}><DropIcon /></SideButton>
              <SideButton $mt={47}><VerifyIcon /></SideButton>
              <SideButton $mt={125}><PersonIcon /></SideButton>
              <SideButton $mt={115}><LockIcon /></SideButton>
              <SideButton $mt={9}><PinIcon /></SideButton>
            </Sidebar>
          </DocBody>
        </DocClient>
      </DocumentWindow>
    </Desktop>
  );
}
